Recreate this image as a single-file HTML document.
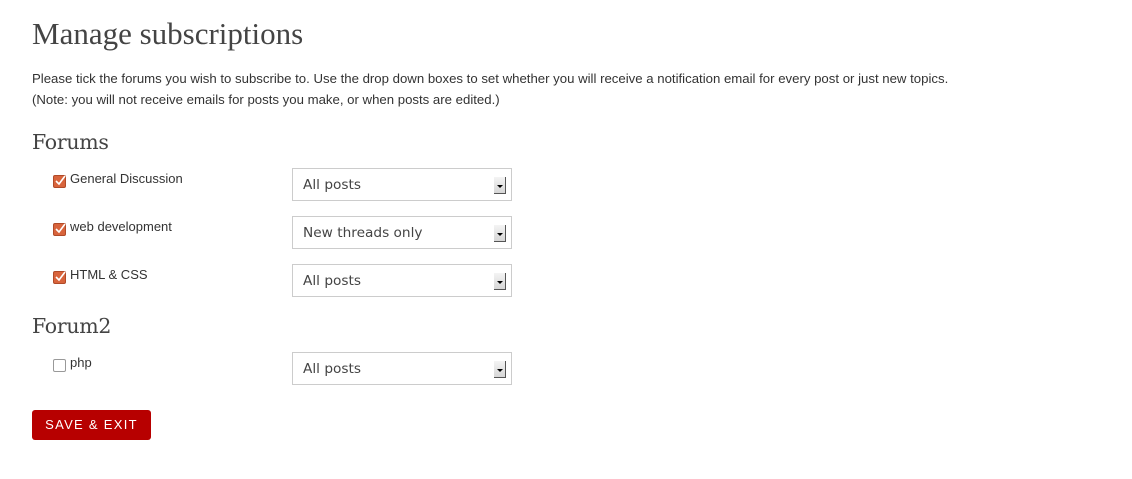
<!DOCTYPE html>
<html><head><style>
body{margin:0;background:#fff;font-family:"Liberation Sans",sans-serif;color:#333;}
h1{position:absolute;left:32px;top:16px;margin:0;font:normal 31px "Liberation Serif",serif;color:#444}
h2{position:absolute;left:32px;margin:0;font:normal 20.5px "DejaVu Serif","Liberation Serif",serif;color:#444;letter-spacing:-0.3px}
p{position:absolute;left:32px;margin:0;font-size:13.2px;color:#333}
.cb{position:absolute;left:53px;width:11px;height:11px;border-radius:2px}
.on{background:#d8643c;border:1px solid #b04a28}
.on svg{position:absolute;left:0;top:-1px}
.off{background:#fff;border:1px solid #999}
.lb{position:absolute;left:70px;font-size:13px;color:#333}
.sel{position:absolute;left:292px;border:1px solid #ccc;background:#fff;color:#444;box-sizing:border-box;width:220px;height:33px}
.sel span{position:absolute;left:10px;top:8px;font-family:"DejaVu Sans","Liberation Sans",sans-serif;font-size:13.7px}
.arr{position:absolute;right:5px;top:8px;width:11px;height:16px;background:linear-gradient(#f4f4f4,#d6d6d6);border-right:1px solid #555;border-bottom:1px solid #555}
.arr:after{content:"";position:absolute;left:3px;top:8px;border-left:3px solid transparent;border-right:3px solid transparent;border-top:3px solid #000}
.btn{position:absolute;left:32px;top:410px;width:119px;height:30px;background:#b70000;border-radius:3px;color:#fff;font-size:13px;letter-spacing:1.3px;text-align:center;line-height:30px}
</style></head><body>
<h1>Manage subscriptions</h1>
<p style="top:71px">Please tick the forums you wish to subscribe to. Use the drop down boxes to set whether you will receive a notification email for every post or just new topics.</p>
<p style="top:92px">(Note: you will not receive emails for posts you make, or when posts are edited.)</p>
<h2 style="top:130px">Forums</h2>
<div class="cb on" style="top:175px"><svg width="12" height="12"><path d="M2 6 L5 9 L11 1" stroke="#fff" stroke-width="1.6" fill="none"/></svg></div><div class="lb" style="top:171px">General Discussion</div>
<div class="sel" style="top:168px"><span>All posts</span><div class="arr"></div></div>
<div class="cb on" style="top:223px"><svg width="12" height="12"><path d="M2 6 L5 9 L11 1" stroke="#fff" stroke-width="1.6" fill="none"/></svg></div><div class="lb" style="top:219px">web development</div>
<div class="sel" style="top:216px"><span>New threads only</span><div class="arr"></div></div>
<div class="cb on" style="top:271px"><svg width="12" height="12"><path d="M2 6 L5 9 L11 1" stroke="#fff" stroke-width="1.6" fill="none"/></svg></div><div class="lb" style="top:267px">HTML &amp; CSS</div>
<div class="sel" style="top:264px"><span>All posts</span><div class="arr"></div></div>
<h2 style="top:314px">Forum2</h2>
<div class="cb off" style="top:359px"></div><div class="lb" style="top:355px">php</div>
<div class="sel" style="top:352px"><span>All posts</span><div class="arr"></div></div>
<div class="btn">SAVE &amp; EXIT</div>
</body></html>
